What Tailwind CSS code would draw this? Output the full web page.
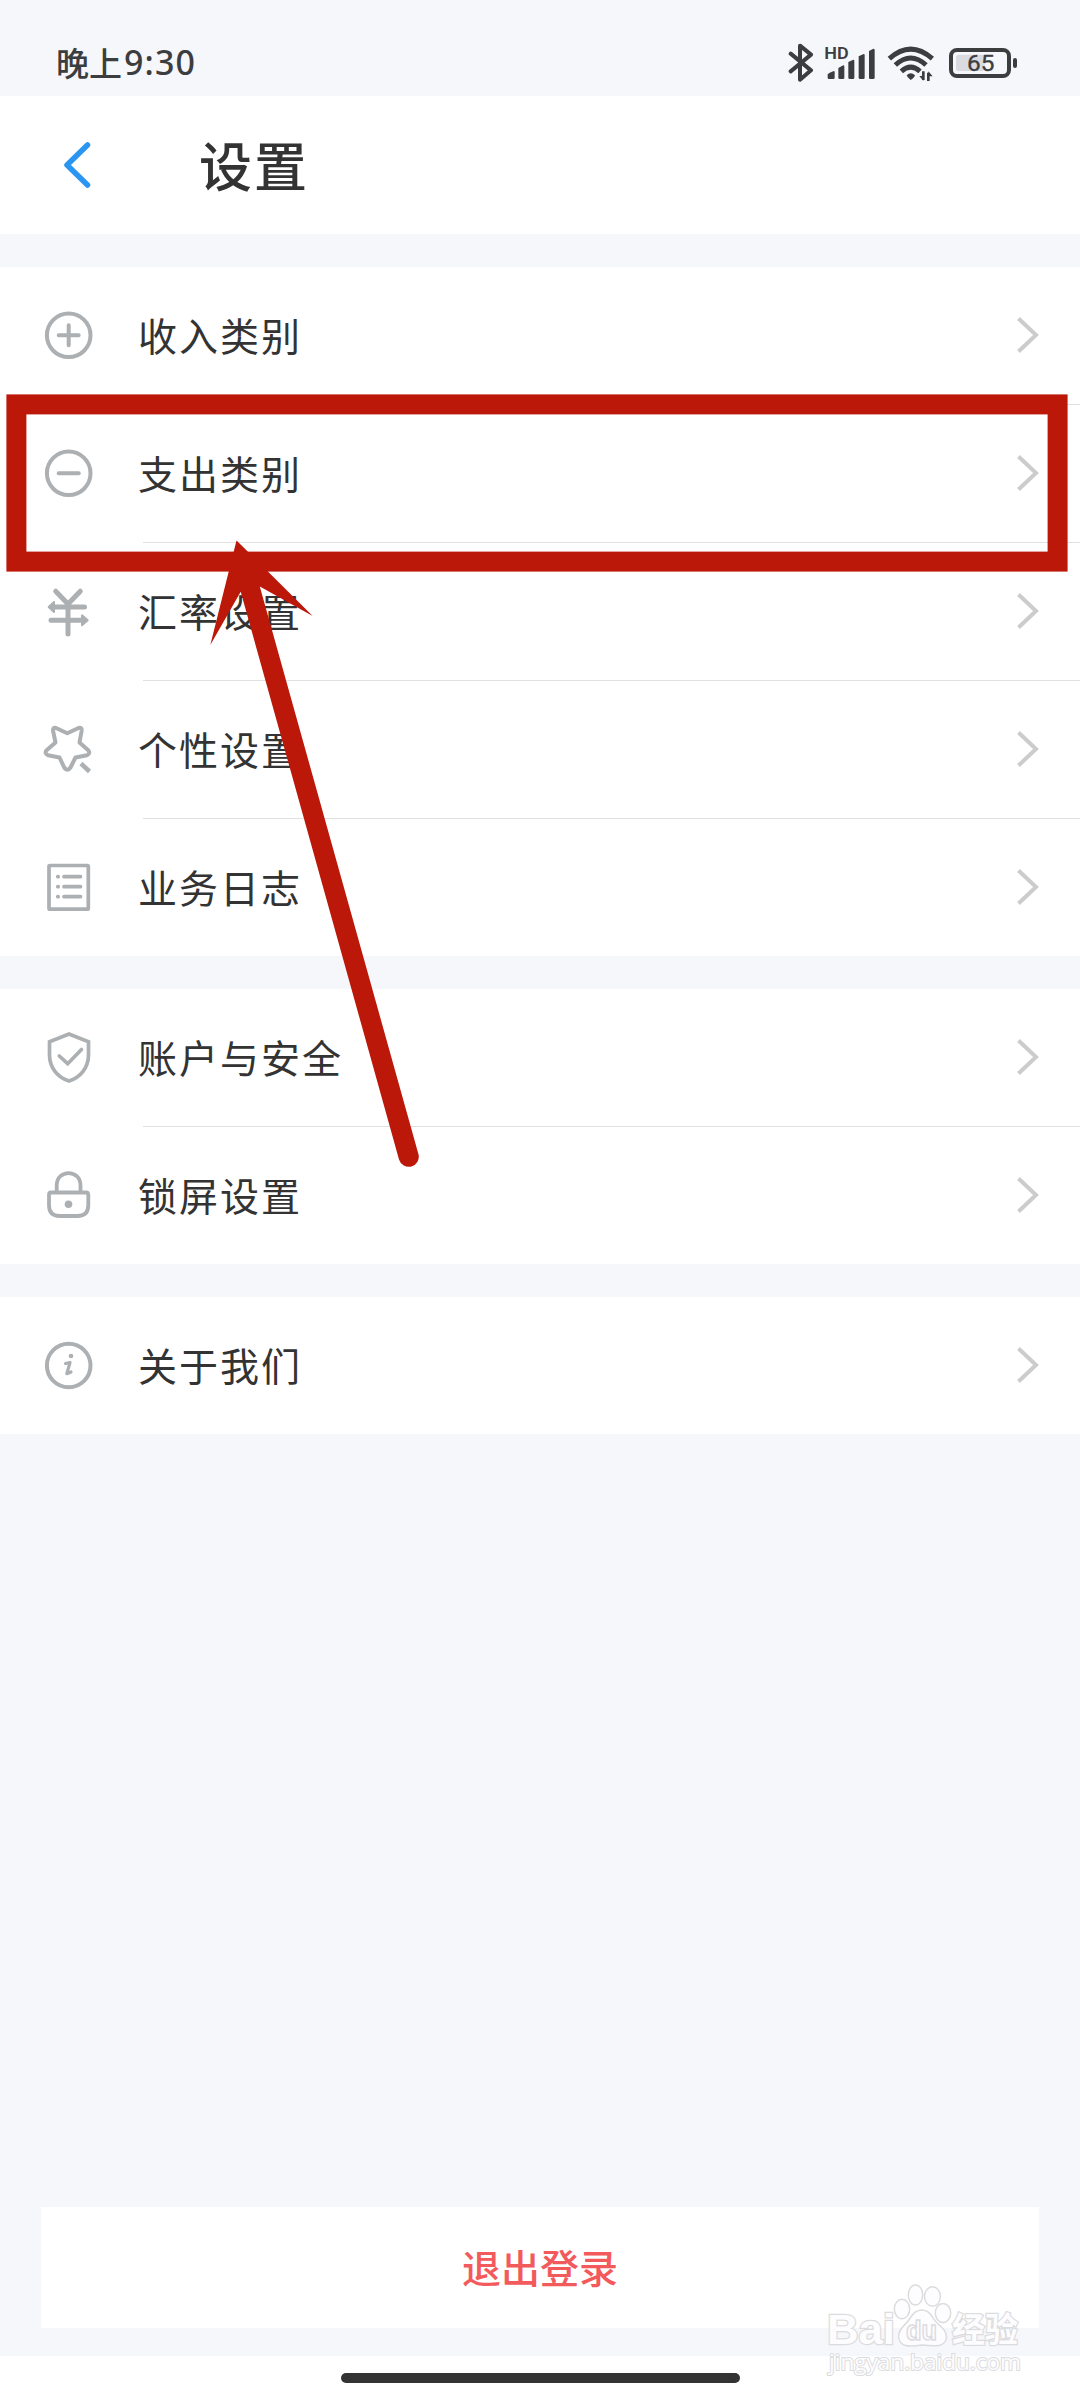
<!DOCTYPE html>
<html lang="zh-CN">
<head>
  <meta charset="UTF-8">
  <meta name="viewport" content="width=device-width, initial-scale=1.0">
  <title>设置</title>
  <script src="https://cdn.jsdelivr.net/npm/@tailwindcss/browser@4"></script>
</head>
<body class="bg-[#f5f7fb] font-['Noto_Sans_CJK_SC',sans-serif] text-[#333333]">
<div class="relative w-[1080px] h-[2400px] flex flex-col overflow-hidden">

  <!-- Status bar -->
  <div class="h-24 shrink-0 pt-10 pl-14 pr-[61px] flex justify-between text-[#3c3d3f]">
    <div class="h-[45px] flex items-center text-[33px] font-medium leading-none whitespace-nowrap">晚上<span class="font-['Noto_Sans',sans-serif] text-[34px] tracking-[1.1px] ml-[2px] -mt-[2px]">9:30</span></div>
    <div class="flex">
      <!-- Bluetooth -->
      <svg class="w-[26px] h-[45px] mr-[10px]" viewBox="84 60 78 135" fill="none" stroke="currentColor" stroke-width="12" stroke-linecap="round" stroke-linejoin="round">
        <path d="M92 101L153 151L120 179V77L153 104L92 154"/>
      </svg>
      <!-- Signal -->
      <svg class="w-[52px] h-[45px] mr-[11px]" viewBox="192 60 156 135" fill="currentColor">
        <text x="193" y="116" font-size="48" font-weight="600" font-family="Roboto, sans-serif" textLength="73" lengthAdjust="spacingAndGlyphs">HD</text>
        <path d="M203 163Q204 160 222 153Q224 153 224 156V173Q224 177 220 177H206Q203 177 203 173Z"/>
        <path d="M235 144L250 136Q253 136 253 140V173Q253 177 249 177H239Q235 177 235 173Z"/>
        <path d="M265 126L280 119Q283 119 283 123V173Q283 177 279 177H269Q265 177 265 173Z"/>
        <path d="M296 109L311 102Q314 102 314 106V173Q314 177 310 177H300Q296 177 296 173Z"/>
        <path d="M327 93L340 86Q344 86 344 90V173Q344 177 340 177H331Q327 177 327 173Z"/>
      </svg>
      <!-- Wifi -->
      <svg class="w-[48px] h-[45px] mr-[13px]" viewBox="381 60 144 135" fill="none" stroke="currentColor" stroke-width="15">
        <path d="M388 116Q452 59 517 116"/>
        <path d="M406 135Q452 93 498 135"/>
        <path d="M424 154Q452 129 480 154"/>
        <path d="M440 166Q452 153 465 166Q464 172 452 180Q441 172 440 166Z" fill="currentColor" stroke="none"/>
        <path d="M490 154V180M505 158V183" stroke-width="8"/>
        <path d="M478 168L490 183V168ZM518 169L505 154V169Z" fill="currentColor" stroke="none"/>
      </svg>
      <!-- Battery -->
      <svg class="w-[71px] h-[45px]" viewBox="564 60 213 135" fill="none">
        <rect x="588" y="104" width="86" height="49" rx="8" fill="#dadbe0"/>
        <rect x="573" y="90" width="174" height="78" rx="18" stroke="currentColor" stroke-width="12"/>
        <rect x="759" y="114" width="12" height="30" rx="6" fill="currentColor"/>
        <text x="621" y="154" font-size="68" font-family="Roboto, sans-serif" fill="currentColor" stroke="currentColor" stroke-width="1" textLength="82" lengthAdjust="spacingAndGlyphs">65</text>
      </svg>
    </div>
  </div>

  <!-- Header -->
  <header class="h-[138px] shrink-0 bg-white flex items-center pl-[60px]">
    <svg class="w-8 h-[50px]" viewBox="0 0 32 50" fill="none" stroke="#2b96f1" stroke-width="5.5" stroke-linecap="round" stroke-linejoin="round">
      <path d="M27.5 5L7 25L27.5 45"/>
    </svg>
    <h1 class="ml-[107px] mb-[2px] text-[53px] font-medium tracking-[2px] leading-none">设置</h1>
  </header>

  <!-- Categories and preferences -->
  <section class="mt-[33px] shrink-0 bg-white">
    <a class="h-[137px] pl-10 pr-10 flex items-center">
      <svg class="w-[57px] h-[57px]" viewBox="0 0 57 57" fill="none" stroke="#acb0b3" stroke-width="4" stroke-linecap="round">
        <circle cx="28.7" cy="28.3" r="21.8"/>
        <path d="M18.7 28.3H38.7M28.7 18.3V38.3"/>
      </svg>
      <span class="ml-[41px] mb-[2px] flex-1 text-[39px] tracking-[2px] leading-none">收入类别</span>
      <svg class="w-6 h-10 mb-[2px]" viewBox="0 0 24 40" fill="none" stroke="#cccccc" stroke-width="4"><path d="M2.5 3.5L20 20L2.5 36.5"/></svg>
    </a>
    <div class="h-px ml-[143px] bg-[#e0e0e0]"></div>

    <a class="h-[137px] pl-10 pr-10 flex items-center">
      <svg class="w-[57px] h-[57px]" viewBox="0 0 57 57" fill="none" stroke="#acb0b3" stroke-width="4" stroke-linecap="round">
        <circle cx="28.7" cy="28.3" r="21.8"/>
        <path d="M18.7 28.3H38.7"/>
      </svg>
      <span class="ml-[41px] mb-[2px] flex-1 text-[39px] tracking-[2px] leading-none">支出类别</span>
      <svg class="w-6 h-10 mb-[2px]" viewBox="0 0 24 40" fill="none" stroke="#cccccc" stroke-width="4"><path d="M2.5 3.5L20 20L2.5 36.5"/></svg>
    </a>
    <div class="h-px ml-[143px] bg-[#e0e0e0]"></div>

    <a class="h-[137px] pl-10 pr-10 flex items-center">
      <svg class="w-[57px] h-[57px]" viewBox="0 0 57 57" fill="none" stroke="#acb0b3" stroke-width="5" stroke-linecap="round" stroke-linejoin="round">
        <path d="M15.7 8.2L28 21L40.3 8.2M28 21V51M13 24H44.5M11 37.3H44"/>
        <path d="M8.7 24L14 19V29ZM47.7 37.3L42 32.3V42.3Z" fill="#acb0b3" stroke-width="2"/>
      </svg>
      <span class="ml-[41px] mb-[2px] flex-1 text-[39px] tracking-[2px] leading-none">汇率设置</span>
      <svg class="w-6 h-10 mb-[2px]" viewBox="0 0 24 40" fill="none" stroke="#cccccc" stroke-width="4"><path d="M2.5 3.5L20 20L2.5 36.5"/></svg>
    </a>
    <div class="h-px ml-[143px] bg-[#e0e0e0]"></div>

    <a class="h-[137px] pl-10 pr-10 flex items-center">
      <svg class="w-[57px] h-[57px]" viewBox="0 0 57 57" fill="none" stroke="#acb0b3" stroke-width="4" stroke-linejoin="round">
        <path d="M16 7L27.3 12.3L38.5 7Q42 6 41.7 9.5L39.5 21.5L48.5 29.5Q50.5 32.5 47 34.3L35.5 36.5L30.5 46.5Q27.3 51 24.2 46.5L19.5 36.5L8 34.3Q4.3 32.5 6.3 29.5L15.5 21.5L13 9.5Q13 6 16 7Z"/>
        <path d="M41 42.5L49.5 50.5" stroke-width="4.5"/>
      </svg>
      <span class="ml-[41px] mb-[2px] flex-1 text-[39px] tracking-[2px] leading-none">个性设置</span>
      <svg class="w-6 h-10 mb-[2px]" viewBox="0 0 24 40" fill="none" stroke="#cccccc" stroke-width="4"><path d="M2.5 3.5L20 20L2.5 36.5"/></svg>
    </a>
    <div class="h-px ml-[143px] bg-[#e0e0e0]"></div>

    <a class="h-[137px] pl-10 pr-10 flex items-center">
      <svg class="w-[57px] h-[57px]" viewBox="0 0 57 57" fill="none" stroke="#acb0b3" stroke-width="3.7" stroke-linecap="round">
        <rect x="9" y="6.5" width="39.3" height="43.7" rx="1"/>
        <path d="M24 17.7H40.5M24 27.7H40.5M24 37.7H40.5M17.8 17.7H18.2M17.8 27.7H18.2M17.8 37.7H18.2"/>
      </svg>
      <span class="ml-[41px] mb-[2px] flex-1 text-[39px] tracking-[2px] leading-none">业务日志</span>
      <svg class="w-6 h-10 mb-[2px]" viewBox="0 0 24 40" fill="none" stroke="#cccccc" stroke-width="4"><path d="M2.5 3.5L20 20L2.5 36.5"/></svg>
    </a>
  </section>

  <!-- Security -->
  <section class="mt-[33px] shrink-0 bg-white">
    <a class="h-[137px] pl-10 pr-10 flex items-center">
      <svg class="w-[57px] h-[57px]" viewBox="0 0 57 57" fill="none" stroke="#acb0b3" stroke-width="3.7">
        <path d="M29 5L48.5 12.7V26C48.5 39 40 48.5 29 52C18 48.5 9.5 39 9.5 26V12.7Z"/>
        <path d="M19.3 27L27.7 34.7L41.5 20.5" stroke-linecap="round"/>
      </svg>
      <span class="ml-[41px] mb-[2px] flex-1 text-[39px] tracking-[2px] leading-none">账户与安全</span>
      <svg class="w-6 h-10 mb-[2px]" viewBox="0 0 24 40" fill="none" stroke="#cccccc" stroke-width="4"><path d="M2.5 3.5L20 20L2.5 36.5"/></svg>
    </a>
    <div class="h-px ml-[143px] bg-[#e0e0e0]"></div>

    <a class="h-[137px] pl-10 pr-10 flex items-center">
      <svg class="w-[57px] h-[57px]" viewBox="0 0 57 57" fill="none" stroke="#acb0b3" stroke-width="3.8">
        <path d="M11 25.5H46Q48.3 25.5 48.3 28V38Q48.3 49 37.5 49H19.5Q9 49 9 38V28Q9 25.5 11 25.5Z"/>
        <path d="M16.7 25V18.5C16.7 2 40.5 2 40.5 18.5V25"/>
        <circle cx="28.5" cy="37.3" r="3.8" fill="#acb0b3" stroke="none"/>
      </svg>
      <span class="ml-[41px] mb-[2px] flex-1 text-[39px] tracking-[2px] leading-none">锁屏设置</span>
      <svg class="w-6 h-10 mb-[2px]" viewBox="0 0 24 40" fill="none" stroke="#cccccc" stroke-width="4"><path d="M2.5 3.5L20 20L2.5 36.5"/></svg>
    </a>
  </section>

  <!-- About -->
  <section class="mt-[33px] shrink-0 bg-white">
    <a class="h-[137px] pl-10 pr-10 flex items-center">
      <svg class="w-[57px] h-[57px]" viewBox="0 0 57 57" fill="none" stroke="#acb0b3" stroke-width="4" stroke-linecap="round">
        <circle cx="28.7" cy="28.5" r="21.8"/>
        <circle cx="31" cy="19" r="2.3" fill="#acb0b3" stroke="none"/>
        <path d="M25.5 26.5L30 25.5L26.8 36.7L31 35" stroke-width="3.2" stroke-linejoin="round"/>
      </svg>
      <span class="ml-[41px] mb-[2px] flex-1 text-[39px] tracking-[2px] leading-none">关于我们</span>
      <svg class="w-6 h-10 mb-[2px]" viewBox="0 0 24 40" fill="none" stroke="#cccccc" stroke-width="4"><path d="M2.5 3.5L20 20L2.5 36.5"/></svg>
    </a>
  </section>

  <!-- Log out -->
  <button class="mt-auto mx-[41px] mb-7 h-[121px] pb-[2px] shrink-0 bg-white text-[39px] font-medium leading-none text-[#f25a5b]">退出登录</button>

  <!-- Home indicator -->
  <div class="h-11 shrink-0 bg-white pt-[17px]">
    <div class="mx-auto w-[399px] h-[10px] rounded-full bg-[#333333]"></div>
  </div>

  <!-- Highlight box and arrow -->
  <svg class="absolute inset-0 w-[1080px] h-[2400px] pointer-events-none" viewBox="0 0 1080 2400" fill="none">
    <rect x="16.4" y="404.4" width="1041.2" height="157.2" stroke="#bc180a" stroke-width="20"/>
    <path d="M236.5 540.5L312.7 616L259.8 586.5L418.4 1154A10 10 0 0 1 399 1159.5L240.7 591.7L210.3 645Z" fill="#bc180a"/>
  </svg>

  <!-- Watermark -->
  <svg class="absolute left-[820px] top-[2276px] w-[210px] h-[104px]" viewBox="0 0 210 104" fill="#fdfdff" stroke="#dcdcde" stroke-width="1.5">
    <g font-weight="700" paint-order="stroke" stroke-width="2.5">
      <text x="7" y="68" font-size="43" font-family="'Liberation Sans', sans-serif" textLength="68" lengthAdjust="spacingAndGlyphs">Bai</text>
      <text x="132" y="66" font-size="34" font-family="'Noto Sans CJK SC', sans-serif" textLength="66" lengthAdjust="spacingAndGlyphs">经验</text>
    </g>
    <ellipse cx="82" cy="33" rx="7.7" ry="9.7"/>
    <ellipse cx="95.5" cy="19" rx="7.2" ry="10"/>
    <ellipse cx="112.5" cy="20.5" rx="8" ry="9.7"/>
    <ellipse cx="123" cy="37" rx="7.7" ry="9.5"/>
    <path d="M102 34C110 34 112 42 117 47C123 52 127 56 126.5 62C125 71 116 70.5 102 69C88 71 80 71 78.5 61C78 54 84 50 88 45C92 40 94 34 102 34Z"/>
    <text x="86" y="64" font-size="27" font-weight="700" font-family="'Liberation Sans', sans-serif" textLength="31" lengthAdjust="spacingAndGlyphs">du</text>
    <text x="9" y="94" font-size="22" font-family="'Open Sans', sans-serif" paint-order="stroke" stroke-width="2" textLength="192" lengthAdjust="spacingAndGlyphs">jingyan.baidu.com</text>
  </svg>
</div>
</body>
</html>
